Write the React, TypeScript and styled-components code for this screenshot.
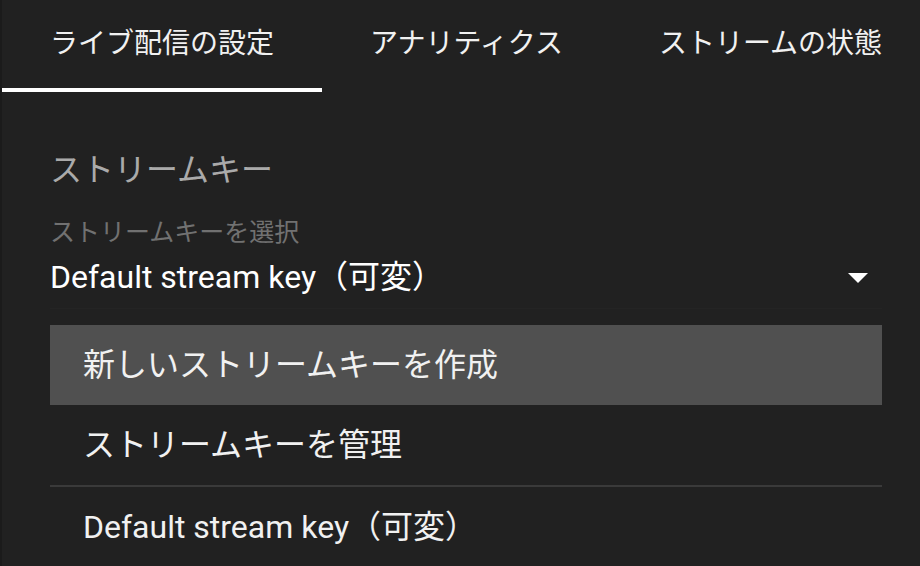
import React from "react";
import styled, { createGlobalStyle } from "styled-components";

const Global = createGlobalStyle`
  html, body { margin: 0; padding: 0; background: #212121; }
  body { font-family: Roboto, "Noto Sans CJK JP", sans-serif; }
  * { box-sizing: border-box; }
`;

const Page = styled.div`
  width: 920px;
  height: 566px;
  overflow: hidden;
  background: #212121;
  border-left: 2px solid #1b1b1b;
  display: flex;
  flex-direction: column;
`;

const TabBar = styled.div`
  display: flex;
  height: 92px;
  flex-shrink: 0;
`;

const Tab = styled.div<{ $active?: boolean }>`
  padding: 0 48px;
  height: 92px;
  line-height: 88px;
  font-size: 28px;
  color: #f1f1f1;
  white-space: nowrap;
  border-bottom: 4px solid ${(p) => (p.$active ? "#ffffff" : "transparent")};
`;

const Content = styled.div`
  padding: 58px 38px 0 48px;
  display: flex;
  flex-direction: column;
`;

const SectionTitle = styled.div`
  font-size: 32px;
  line-height: 40px;
  color: #aaaaaa;
`;

const Field = styled.div`
  position: relative;
  margin-top: 27px;
`;

const FieldLabel = styled.div`
  font-size: 25px;
  line-height: 32px;
  color: #717171;
`;

const SelectRow = styled.div`
  display: flex;
  align-items: center;
  justify-content: space-between;
  margin-top: 8px;
  padding: 0 14px 11px 0;
  border-bottom: 1px solid #242424;
`;

const SelectValue = styled.div`
  font-size: 32px;
  line-height: 40px;
  color: #ffffff;
`;

const Arrow = styled.svg`
  width: 20px;
  height: 10px;
  display: block;
  margin-top: 2px;
`;

const Menu = styled.div`
  position: absolute;
  top: 100%;
  left: 0;
  right: 0;
  padding-top: 16px;
  background: #212121;
  display: flex;
  flex-direction: column;
`;

const MenuItem = styled.div<{ $highlighted?: boolean }>`
  height: 80px;
  display: flex;
  align-items: center;
  padding: 0 0 6px 33px;
  font-size: 32px;
  color: #f1f1f1;
  background: ${(p) => (p.$highlighted ? "#505050" : "transparent")};
`;

const Divider = styled.div`
  height: 2px;
  background: #3a3a3a;
`;

export default function App() {
  return (
    <>
      <Global />
      <Page>
        <TabBar>
          <Tab $active>ライブ配信の設定</Tab>
          <Tab>アナリティクス</Tab>
          <Tab>ストリームの状態</Tab>
        </TabBar>
        <Content>
          <SectionTitle>ストリームキー</SectionTitle>
          <Field>
            <FieldLabel>ストリームキーを選択</FieldLabel>
            <SelectRow>
              <SelectValue>Default stream key（可変）</SelectValue>
              <Arrow viewBox="0 0 20 10">
                <path d="M0 0 L20 0 L10 10 Z" fill="#ffffff" />
              </Arrow>
            </SelectRow>
            <Menu>
              <MenuItem $highlighted>新しいストリームキーを作成</MenuItem>
              <MenuItem>ストリームキーを管理</MenuItem>
              <Divider />
              <MenuItem>Default stream key（可変）</MenuItem>
            </Menu>
          </Field>
        </Content>
      </Page>
    </>
  );
}
